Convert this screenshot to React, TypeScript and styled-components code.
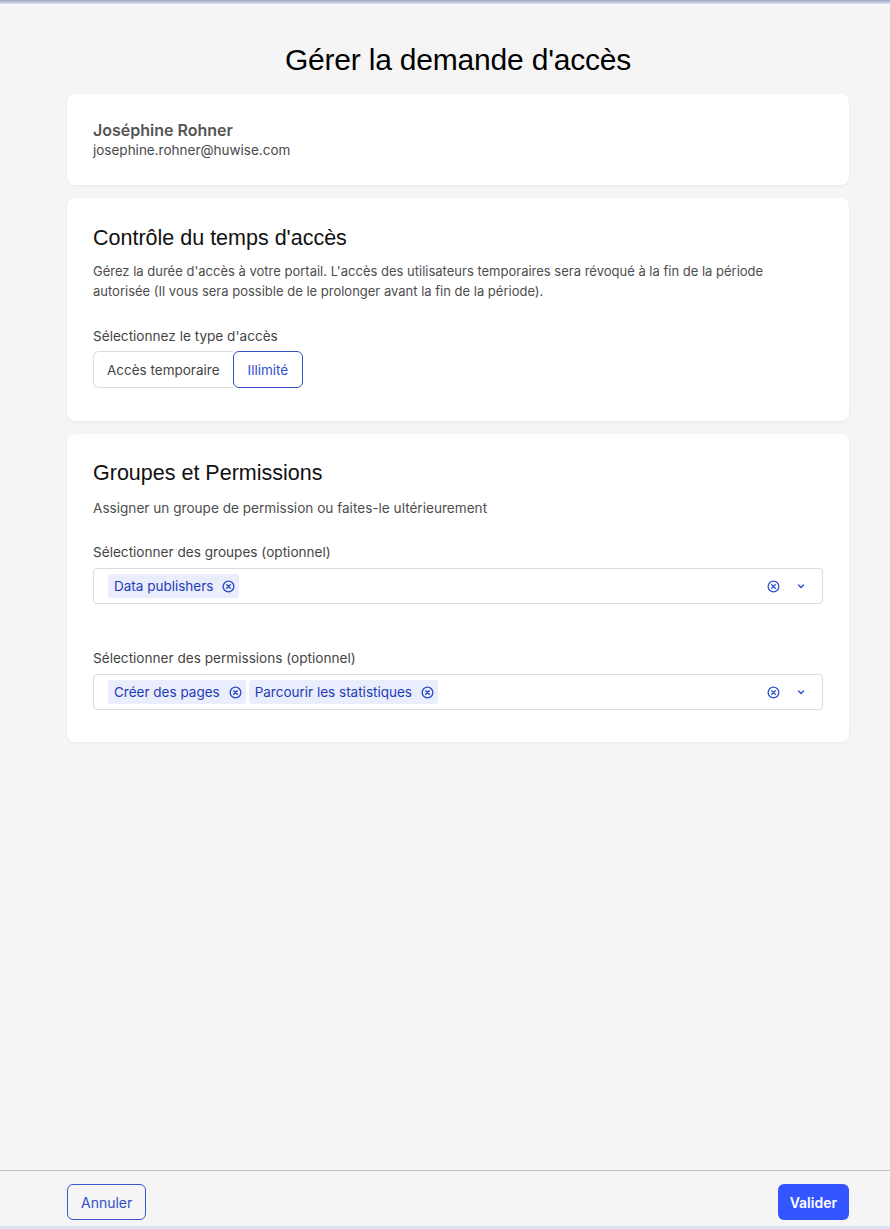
import styled, { createGlobalStyle } from 'styled-components';

const GlobalStyle = createGlobalStyle`
  html, body {
    margin: 0;
    padding: 0;
    background: #f5f5f5;
  }
  body {
    font-family: Inter, "Noto Sans", sans-serif;
    -webkit-font-smoothing: antialiased;
  }
  * {
    box-sizing: border-box;
  }
`;

const CircleX = () => (
  <svg width="13" height="13" viewBox="0 0 16 16" fill="none" stroke="currentColor" strokeWidth="1.6" strokeLinecap="round">
    <circle cx="8" cy="8" r="6.6" />
    <path d="M5.8 5.8l4.4 4.4M10.2 5.8l-4.4 4.4" />
  </svg>
);

const Chevron = () => (
  <svg width="10" height="10" viewBox="0 0 10 10" fill="none" stroke="currentColor" strokeWidth="1.4" strokeLinecap="round" strokeLinejoin="round">
    <path d="M2.5 4l2.5 2.5L7.5 4" />
  </svg>
);

const groups = ['Data publishers'];
const permissions = ['Créer des pages', 'Parcourir les statistiques'];

const TagSelect = ({ label, values }: { label: string; values: string[] }) => (
  <Field>
    <Label>{label}</Label>
    <SelectBox>
      <Tags>
        {values.map((v) => (
          <Tag key={v}>
            {v}
            <TagRemove>
              <CircleX />
            </TagRemove>
          </Tag>
        ))}
      </Tags>
      <Indicators>
        <CircleX />
        <Chevron />
      </Indicators>
    </SelectBox>
  </Field>
);

const App = () => (
  <Page>
    <GlobalStyle />
    <TopBar />
    <Main>
      <Title>Gérer la demande d'accès</Title>
      <Card $pad="26px 26px 25px">
        <UserName>Joséphine Rohner</UserName>
        <UserEmail>josephine.rohner@huwise.com</UserEmail>
      </Card>

      <Card $pad="26px 26px 33px">
        <SectionTitle>Contrôle du temps d'accès</SectionTitle>
        <Description>
          Gérez la durée d'accès à votre portail. L'accès des utilisateurs temporaires sera révoqué à la fin de la
          période autorisée (Il vous sera possible de le prolonger avant la fin de la période).
        </Description>
        <Field $top={25}>
          <Label>Sélectionnez le type d'accès</Label>
          <Segmented>
            <Segment>Accès temporaire</Segment>
            <Segment $active>Illimité</Segment>
          </Segmented>
        </Field>
      </Card>

      <Card $pad="25px 26px 32px">
        <SectionTitle>Groupes et Permissions</SectionTitle>
        <Description $top={11} $size={13.6}>
          Assigner un groupe de permission ou faites-le ultérieurement
        </Description>
        <Stack>
          <TagSelect label="Sélectionner des groupes (optionnel)" values={groups} />
          <TagSelect label="Sélectionner des permissions (optionnel)" values={permissions} />
        </Stack>
      </Card>
    </Main>
    <Footer>
      <OutlineButton>Annuler</OutlineButton>
      <PrimaryButton>Valider</PrimaryButton>
    </Footer>
    <BottomStrip />
  </Page>
);

export default App;

const Page = styled.div`
  display: flex;
  flex-direction: column;
  height: 1229px;
  overflow: hidden;
`;

const TopBar = styled.div`
  height: 4px;
  flex-shrink: 0;
  background: linear-gradient(180deg, #9eabc6 0%, #b9c3d8 50%, #e4e8f0 100%);
`;

const Main = styled.main`
  flex: 1;
  display: flex;
  flex-direction: column;
  gap: 13px;
  padding: 0 41px 0 67px;
`;

const Title = styled.h1`
  font-family: "Liberation Sans", Arial, sans-serif;
  font-size: 30px;
  font-weight: 400;
  line-height: 34px;
  color: #000;
  text-align: center;
  margin: 39px 0 4px;
  letter-spacing: -0.2px;
`;

const Card = styled.section<{ $pad: string }>`
  background: #fff;
  border-radius: 8px;
  padding: ${({ $pad }) => $pad};
  box-shadow: 0 1px 3px rgba(0, 0, 0, 0.06);
  display: flex;
  flex-direction: column;
`;

const UserName = styled.div`
  font-size: 16px;
  font-weight: 600;
  line-height: 20px;
  color: #555;
`;

const UserEmail = styled.div`
  font-size: 13.5px;
  line-height: 20px;
  color: #4a4a4a;
`;

const SectionTitle = styled.h2`
  font-family: "Liberation Sans", Arial, sans-serif;
  font-size: 21.5px;
  font-weight: 400;
  line-height: 28px;
  color: #111;
  margin: 0;
`;

const Description = styled.p<{ $top?: number; $size?: number }>`
  font-size: ${({ $size }) => $size ?? 13}px;
  line-height: 20px;
  color: #4d4d4d;
  margin: ${({ $top }) => $top ?? 9}px 0 0;
`;

const Stack = styled.div`
  display: flex;
  flex-direction: column;
  gap: 44px;
  margin-top: 24px;
`;

const Field = styled.div<{ $top?: number }>`
  display: flex;
  flex-direction: column;
  gap: 6px;
  margin-top: ${({ $top }) => $top ?? 0}px;
`;

const Label = styled.label`
  font-size: 13.6px;
  line-height: 20px;
  color: #444;
`;

const Segmented = styled.div`
  display: flex;
  align-self: flex-start;
  margin-top: -1px;
`;

const Segment = styled.button<{ $active?: boolean }>`
  font-family: inherit;
  font-size: 13.5px;
  height: 37px;
  padding: 0 ${({ $active }) => ($active ? 14 : 13)}px;
  background: #fff;
  cursor: pointer;
  color: ${({ $active }) => ($active ? '#2f4fcf' : '#444')};
  border: 1px solid ${({ $active }) => ($active ? '#3450c8' : '#dcdcdc')};
  border-radius: ${({ $active }) => ($active ? '6px' : '6px 0 0 6px')};
  ${({ $active }) => (!$active ? 'border-right: none;' : '')}
`;

const SelectBox = styled.div`
  display: flex;
  align-items: center;
  height: 36px;
  padding: 0 14px;
  border: 1px solid #dadada;
  border-radius: 4px;
  background: #fff;
`;

const Tags = styled.div`
  flex: 1;
  display: flex;
  gap: 3px;
`;

const Tag = styled.span`
  display: inline-flex;
  align-items: center;
  gap: 9px;
  height: 24px;
  padding: 0 4px 0 6px;
  border-radius: 3px;
  background: #e9edfc;
  color: #1f3cb8;
  font-size: 13.5px;
`;

const TagRemove = styled.span`
  display: inline-flex;
  color: #2a46c4;
`;

const Indicators = styled.div`
  display: flex;
  align-items: center;
  gap: 16px;
  color: #2f4fd6;
  margin-right: 2px;
`;

const Footer = styled.footer`
  flex-shrink: 0;
  display: flex;
  justify-content: space-between;
  align-items: flex-start;
  height: 56px;
  padding: 13px 41px 0 67px;
  border-top: 1px solid #c4c4c4;
`;

const OutlineButton = styled.button`
  font-family: inherit;
  font-size: 14px;
  height: 36px;
  padding: 0 13px;
  border-radius: 6px;
  border: 1px solid #3a56d0;
  background: transparent;
  color: #2f4fc6;
  cursor: pointer;
`;

const PrimaryButton = styled.button`
  font-family: inherit;
  font-size: 14px;
  font-weight: 600;
  height: 36px;
  padding: 0 12px;
  border-radius: 6px;
  border: none;
  background: #3355ff;
  color: #fff;
  cursor: pointer;
`;

const BottomStrip = styled.div`
  height: 3px;
  flex-shrink: 0;
  background: #dbe5f4;
`;
